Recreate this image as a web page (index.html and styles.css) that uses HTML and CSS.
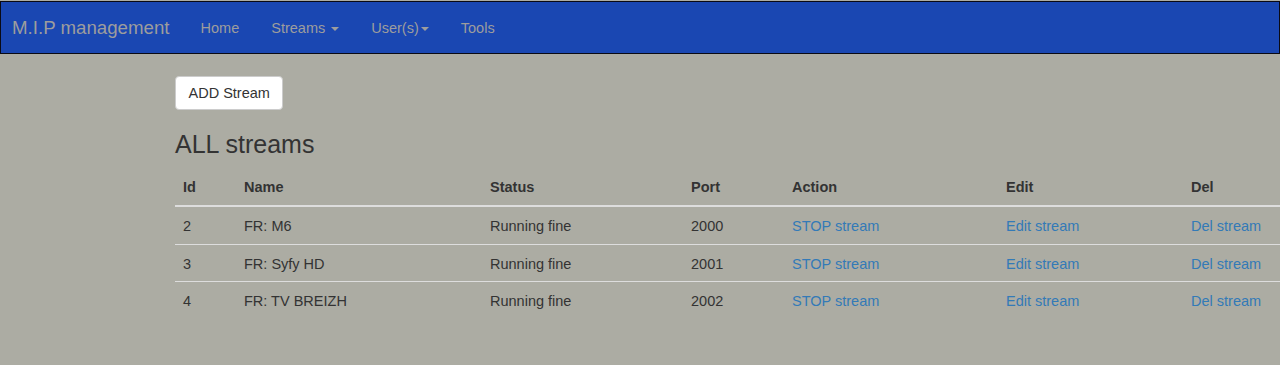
FILE: index.html
```html
<!DOCTYPE html>
<html lang="en">
<head>
<meta charset="utf-8">
<title>M.I.P management</title>
<link rel="stylesheet" href="styles.css">
</head>
<body>
<nav class="navbar">
  <a class="brand" href="#">M.I.P management</a>
  <ul class="nav">
    <li><a href="#">Home</a></li>
    <li><a href="#">Streams <span class="caret"></span></a></li>
    <li><a href="#">User(s)<span class="caret"></span></a></li>
    <li><a href="#">Tools</a></li>
  </ul>
</nav>
<main class="content">
  <button class="btn" type="button">ADD Stream</button>
  <h3 class="title">ALL streams</h3>
  <table class="table">
    <colgroup>
      <col class="c-id"><col class="c-name"><col class="c-status"><col class="c-port"><col class="c-action"><col class="c-edit"><col>
    </colgroup>
    <thead>
      <tr><th>Id</th><th>Name</th><th>Status</th><th>Port</th><th>Action</th><th>Edit</th><th>Del</th></tr>
    </thead>
    <tbody>
      <tr><td>2</td><td>FR: M6</td><td>Running fine</td><td>2000</td><td><a href="#">STOP stream</a></td><td><a href="#">Edit stream</a></td><td><a href="#">Del stream</a></td></tr>
      <tr><td>3</td><td>FR: Syfy HD</td><td>Running fine</td><td>2001</td><td><a href="#">STOP stream</a></td><td><a href="#">Edit stream</a></td><td><a href="#">Del stream</a></td></tr>
      <tr><td>4</td><td>FR: TV BREIZH</td><td>Running fine</td><td>2002</td><td><a href="#">STOP stream</a></td><td><a href="#">Edit stream</a></td><td><a href="#">Del stream</a></td></tr>
    </tbody>
  </table>
</main>
</body>
</html>
```

FILE: styles.css
```css
* { box-sizing: border-box; }
html, body { margin: 0; padding: 0; }
body {
  background: #acaca3;
  font-family: "Liberation Sans", Arial, Helvetica, sans-serif;
  font-size: 14.5px;
  line-height: 20.5px;
  color: #333;
  overflow: hidden;
  height: 365px;
}
a { text-decoration: none; }

.navbar {
  margin-top: 1px;
  height: 53px;
  background: #1a47b2;
  border: 1px solid #0a0a14;
  display: flex;
  align-items: center;
  padding-left: 11px;
}
.brand {
  color: #9d9d9d;
  font-size: 18.7px;
  line-height: 22px;
  padding-right: 15px;
}
.nav {
  list-style: none;
  margin: 0;
  padding: 0;
  display: flex;
}
.nav a {
  display: block;
  color: #9d9d9d;
  padding: 0 16px;
  line-height: 20px;
}
.caret {
  display: inline-block;
  width: 0;
  height: 0;
  margin-left: 2px;
  vertical-align: middle;
  border-top: 4px solid #9d9d9d;
  border-left: 4px solid transparent;
  border-right: 4px solid transparent;
}

.content {
  padding-left: 175px;
  padding-top: 22px;
}
.btn {
  display: block;
  height: 34px;
  padding: 0 12.5px;
  background: #fff;
  border: 1px solid #ccc;
  border-radius: 4px;
  font-family: inherit;
  font-size: 14.5px;
  color: #333;
}
.title {
  margin: 21px 0 10.5px;
  font-size: 25px;
  font-weight: 500;
  line-height: 27px;
  color: #333;
}

.table {
  width: 100%;
  border-collapse: collapse;
  table-layout: fixed;
}
.c-id { width: 61px; }
.c-name { width: 246px; }
.c-status { width: 201px; }
.c-port { width: 101px; }
.c-action { width: 214px; }
.c-edit { width: 185px; }
.table th, .table td {
  padding: 8px;
  text-align: left;
  white-space: nowrap;
  vertical-align: top;
}
.table th {
  font-weight: bold;
  border-bottom: 2px solid #ddd;
}
.table td {
  padding-top: 9px;
  padding-bottom: 7px;
  border-top: 1px solid #ddd;
}
.table td a { color: #337ab7; }
```
